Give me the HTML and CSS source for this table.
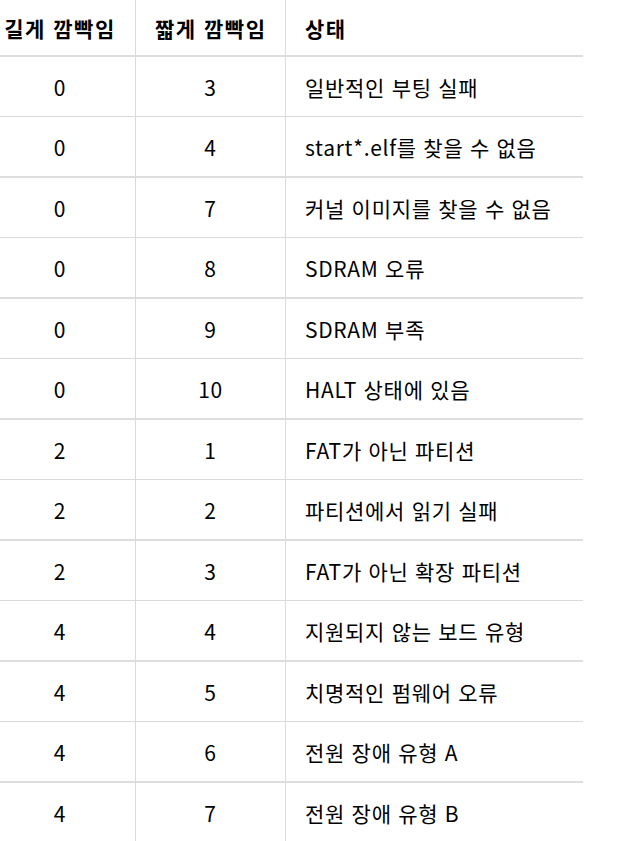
FILE: index.html
```html
<!DOCTYPE html>
<html lang="ko">
<head>
<meta charset="utf-8">
<link rel="stylesheet" href="styles.css">
</head>
<body>
<table class="blink-table">
  <thead>
    <tr><th class="c-num">길게 깜빡임</th><th class="c-num">짧게 깜빡임</th><th class="c-text">상태</th></tr>
  </thead>
  <tbody>
    <tr><td class="c-num">0</td><td class="c-num">3</td><td class="c-text">일반적인 부팅 실패</td></tr>
    <tr><td class="c-num">0</td><td class="c-num">4</td><td class="c-text">start*.elf를 찾을 수 없음</td></tr>
    <tr><td class="c-num">0</td><td class="c-num">7</td><td class="c-text">커널 이미지를 찾을 수 없음</td></tr>
    <tr><td class="c-num">0</td><td class="c-num">8</td><td class="c-text">SDRAM 오류</td></tr>
    <tr><td class="c-num">0</td><td class="c-num">9</td><td class="c-text">SDRAM 부족</td></tr>
    <tr><td class="c-num">0</td><td class="c-num">10</td><td class="c-text">HALT 상태에 있음</td></tr>
    <tr><td class="c-num">2</td><td class="c-num">1</td><td class="c-text">FAT가 아닌 파티션</td></tr>
    <tr><td class="c-num">2</td><td class="c-num">2</td><td class="c-text">파티션에서 읽기 실패</td></tr>
    <tr><td class="c-num">2</td><td class="c-num">3</td><td class="c-text">FAT가 아닌 확장 파티션</td></tr>
    <tr><td class="c-num">4</td><td class="c-num">4</td><td class="c-text">지원되지 않는 보드 유형</td></tr>
    <tr><td class="c-num">4</td><td class="c-num">5</td><td class="c-text">치명적인 펌웨어 오류</td></tr>
    <tr><td class="c-num">4</td><td class="c-num">6</td><td class="c-text">전원 장애 유형 A</td></tr>
    <tr><td class="c-num">4</td><td class="c-num">7</td><td class="c-text">전원 장애 유형 B</td></tr>
  </tbody>
</table>
</body>
</html>
```

FILE: styles.css
```css
html, body {
  margin: 0;
  padding: 0;
  background: #fff;
  overflow: hidden;
}
body {
  font-family: "Noto Sans CJK KR", "Noto Sans", sans-serif;
  font-size: 21px;
  color: #000;
}
.blink-table {
  border-collapse: collapse;
  width: 598px;
  margin-left: -15px;
  table-layout: fixed;
}
.blink-table th,
.blink-table td {
  padding: 0 19px;
  border-right: 1px solid #dadada;
  border-bottom: 1px solid #dadada;
  line-height: 26px;
  white-space: nowrap;
  letter-spacing: 0.7px;
}
.blink-table th:last-child,
.blink-table td:last-child {
  border-right: none;
}
.blink-table th {
  height: 55px;
  font-weight: bold;
  letter-spacing: 1.5px;
  border-bottom: 2px solid #dddddd;
}
.blink-table td {
  height: 59px;
  font-weight: normal;
}
.blink-table tbody tr:nth-child(even) td {
  border-bottom: 2px solid #dddddd;
  height: 59px;
}
.c-num {
  text-align: center;
}
.blink-table th.c-num:first-child,
.blink-table td.c-num:first-child {
  width: 112px;
}
.blink-table th.c-num:nth-child(2),
.blink-table td.c-num:nth-child(2) {
  width: 111px;
}
.c-text {
  text-align: left;
}
```
